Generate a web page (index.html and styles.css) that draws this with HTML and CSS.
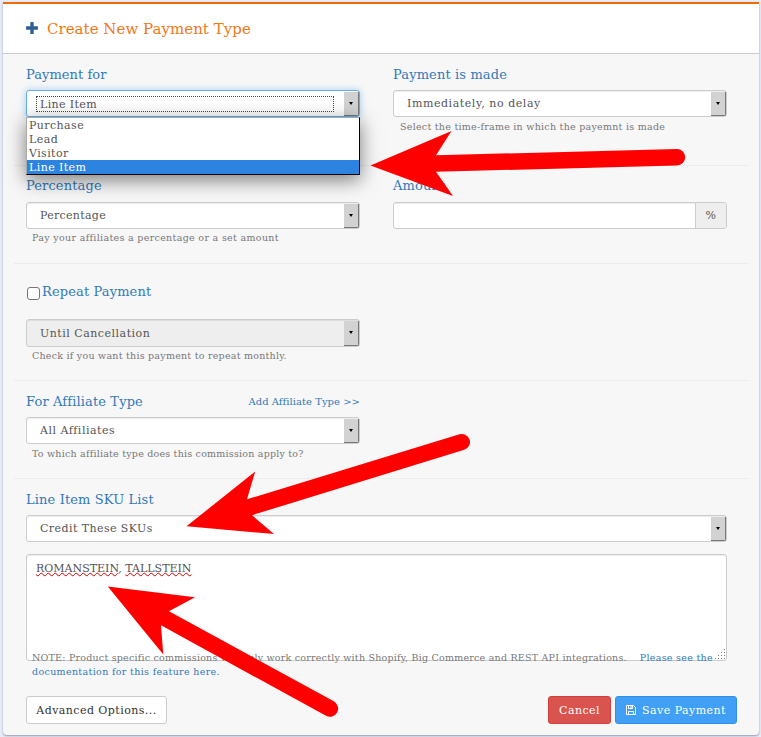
FILE: index.html
```html
<!DOCTYPE html>
<html lang="en">
<head>
<meta charset="utf-8">
<title>Create New Payment Type</title>
<link rel="stylesheet" href="styles.css">
</head>
<body>
<main class="panel">
  <header class="panel-head">
    <svg class="plus" width="12" height="12" viewBox="0 0 12 12"><path d="M4.300.6Q4.300 0 5 0h2q.7 0 .7.6v3.700h3.600q.7 0 .7.7v2q0 .7-.7.7H7.700v3.700q0 .6-.7.6H5q-.7 0-.7-.6V7.700H.7Q0 7.700 0 7V5q0-.7.7-.7h3.600z"/></svg>
    <h1>Create New Payment Type</h1>
  </header>

  <section class="row row-for">
    <div class="field">
      <label class="label l-for">Payment for</label>
      <div class="select focused"><span class="value focus-ring">Line Item</span><i class="drop"></i>
        <ul class="menu">
          <li>Purchase</li><li>Lead</li><li>Visitor</li><li class="active">Line Item</li>
        </ul>
      </div>
    </div>
    <div class="field">
      <label class="label">Payment is made</label>
      <div class="select"><span class="value delay">Immediately, no delay</span><i class="drop"></i></div>
      <p class="help indent">Select the time-frame in which the payemnt is made</p>
    </div>
  </section>

  <section class="row row-amount">
    <div class="field">
      <label class="label">Percentage</label>
      <div class="select"><span class="value v-pct">Percentage</span><i class="drop"></i></div>
      <p class="help h-pct">Pay your affiliates a percentage or a set amount</p>
    </div>
    <div class="field">
      <label class="label">Amount</label>
      <div class="group"><span class="input"></span><span class="addon">%</span></div>
    </div>
  </section>

  <section class="row row-repeat">
    <div class="field">
      <label class="label check"><span class="box"></span><span>Repeat Payment</span></label>
      <div class="select disabled"><span class="value">Until Cancellation</span><i class="drop"></i></div>
      <p class="help h-rep">Check if you want this payment to repeat monthly.</p>
    </div>
  </section>

  <section class="row row-type">
    <div class="field">
      <div class="label split"><span>For Affiliate Type</span><a class="add">Add Affiliate Type &gt;&gt;</a></div>
      <div class="select"><span class="value">All Affiliates</span><i class="drop"></i></div>
      <p class="help">To which affiliate type does this commission apply to?</p>
    </div>
  </section>

  <section class="row row-list">
    <div class="field wide">
      <label class="label">Line Item SKU List</label>
      <div class="select"><span class="value v-sku">Credit These SKUs</span><i class="drop"></i></div>
      <div class="area"><span class="misspelt">ROMANSTEIN</span>, <span class="misspelt">TALLSTEIN</span>
        <svg class="grip" width="11" height="11" viewBox="0 0 11 11"><path d="M9 0h1v1H9zM6 3h1v1H6zM9 3h1v1H9zM3 6h1v1H3zM6 6h1v1H6zM9 6h1v1H9zM0 9h1v1H0zM3 9h1v1H3zM6 9h1v1H6zM9 9h1v1H9z"/></svg>
      </div>
      <p class="help note"><span>NOTE: Product specific commissions will only work correctly with Shopify, Big Commerce and REST API integrations.</span><a class="n2">Please see the</a><br><a class="n3">documentation for this feature here.</a></p>
    </div>
  </section>

  <footer class="actions">
    <button class="btn plain">Advanced Options...</button>
    <button class="btn danger">Cancel</button>
    <button class="btn primary"><svg width="10" height="10" viewBox="0 0 10 10"><path d="M.5.5h7l2 2v7h-9zM2.500.5v3h4v-3M2.500 9.500v-3h5v3"/><path d="M5 1v2"/></svg><span>Save Payment</span></button>
  </footer>
</main>

<svg class="arrows" width="761" height="737" viewBox="0 0 761 737">
  <path d="M370.500 165.500 451.500 131 436 155.300 677 149A8 8 0 0 1 677 165.500L436 171.800 453 196z"/>
  <path d="M186.500 526.300 255.200 471.500 247 499.300 459.500 434.300A8 8 0 0 1 464.300 449.800L252 515.200 274 534z"/>
  <path d="M107.800 586.500 195 597.300 169 611.200 333.800 701.300A8 8 0 0 1 326 715.800L161 625.300 163.300 654.500z"/>
</svg>
</body>
</html>
```
FILE: styles.css
```css
* { box-sizing: border-box; }
body {
  margin: 0;
  height: 737px;
  padding: 2px 2px 0 3px;
  overflow: hidden;
  background: #e9ecf6;
  font-family: "DejaVu Serif", serif;
  font-size: 11px;
  letter-spacing: .3px;
  color: #555;
}
h1, p, ul { margin: 0; padding: 0; }
.panel {
  height: 733px;
  background: #f7f7f7;
  border-top: 2px solid #ee6c00;
  border-radius: 0 0 4px 4px;
  box-shadow: 0 1px 2px rgba(60, 70, 110, .5);
}
.panel-head {
  height: 50px;
  display: flex;
  align-items: center;
  gap: 9px;
  padding-left: 23px;
  background: #fff;
  border-bottom: 1px solid #ccc;
}
.plus { fill: #2d5f93; margin-bottom: 1px; }
h1 { font-size: 15px; font-weight: 400; letter-spacing: .03px; color: #f07818; }

.row {
  display: flex;
  gap: 33px;
  margin: 0 10px 0 11px;
  padding: 0 0 0 12px;
  border-bottom: 1px solid #ececec;
}
.row-for { height: 112px; padding-top: 11px; }
.row-amount { height: 98px; padding-top: 10px; }
.row-amount .label { height: 26px; }
.row-repeat { height: 117px; padding-top: 18px; }
.row-type { height: 98px; padding-top: 11px; }
.row-list { height: 217px; padding-top: 11px; border-bottom: 0; }
.field { width: 334px; }
.field.wide { width: 701px; }
.label {
  display: block;
  height: 25px;
  line-height: 19px;
  font-size: 13px;
  letter-spacing: .13px;
  color: #337ab7;
  white-space: nowrap;
}
.l-for { letter-spacing: .05px; }
.check { display: flex; height: 37px; }
.box {
  width: 13px;
  height: 13px;
  margin: 5px 2px 0 1px;
  border: 1px solid #777;
  border-radius: 3px;
  background: #fff;
}
.split { display: flex; justify-content: space-between; }
.add { font-size: 10px; letter-spacing: .03px; }

.select {
  position: relative;
  display: flex;
  justify-content: space-between;
  height: 27px;
  border: 1px solid #ccc;
  border-radius: 3px;
  background: #fff;
  box-shadow: inset 0 1px 1px rgba(0, 0, 0, .075);
}
.value { padding-left: 13px; line-height: 26px; letter-spacing: .5px; white-space: nowrap; }
.delay { letter-spacing: .56px; }
.v-pct { letter-spacing: .3px; }
.v-sku { letter-spacing: .43px; }
.disabled { height: 28px; background: #eee; }
.disabled .value { line-height: 27px; }
.focused { border-color: #66afe9; box-shadow: 0 0 7px rgba(102, 175, 233, .6); }
.focus-ring {
  width: 298px;
  height: 16px;
  margin: 5px 0 0 9px;
  padding-left: 3px;
  border: 1px dotted #444;
  line-height: 15px;
  letter-spacing: .38px;
}
.drop {
  display: flex;
  align-items: center;
  justify-content: center;
  width: 15px;
  margin: 1px 0 0;
  background: #d2d2d2;
  border-right: 1px solid #777;
  border-bottom: 1px solid #777;
  border-radius: 0 0 2px 0;
}
.drop::before {
  content: "";
  margin-bottom: 1px;
  border: 2.500px solid transparent;
  border-top: 3px solid #000;
  border-bottom: 0;
}
.menu {
  position: absolute;
  z-index: 1;
  left: -1px;
  top: 26px;
  width: 334px;
  height: 58px;
  list-style: none;
  background: #fff;
  border: 1px solid #000;
  border-top-color: #aaa;
  border-left-color: #aaa;
  box-shadow: 0 5px 18px rgba(0, 0, 0, .5);
  letter-spacing: .42px;
}
.menu li { height: 14px; padding-left: 2px; line-height: 15px; }
.menu .active { background: #2d84e0; color: #fff; }

.help { padding: 3px 0 0 6px; font-size: 9.500px; line-height: 14px; letter-spacing: .22px; color: #777; white-space: nowrap; }
.indent { padding-left: 7px; letter-spacing: .26px; }
.h-pct { padding-top: 2px; letter-spacing: .32px; }
.h-rep { padding-top: 2px; letter-spacing: .24px; }
.group { display: flex; height: 27px; border: 1px solid #ccc; border-radius: 3px; overflow: hidden; background: #fff; }
.input { flex: 1; box-shadow: inset 0 1px 1px rgba(0, 0, 0, .075); }
.addon { width: 31px; border-left: 1px solid #ccc; background: #eee; text-align: center; line-height: 25px; }
.area {
  position: relative;
  height: 107px;
  margin-top: 12px;
  padding: 5px 9px;
  border: 1px solid #ccc;
  border-radius: 3px;
  background: #fff;
  box-shadow: inset 0 1px 1px rgba(0, 0, 0, .075);
  line-height: 17px;
  letter-spacing: 0;
}
.misspelt { text-decoration: underline wavy #e00000 1px; text-decoration-skip-ink: none; text-underline-offset: 0; }
.grip { position: absolute; right: 0; bottom: 0; fill: #777; }
.note { position: relative; margin-top: -13px; }
.note a { color: #337ab7; }
.n2 { margin-left: 13px; letter-spacing: .3px; }
.n3 { letter-spacing: .34px; }

.actions { display: flex; height: 28px; margin: 0 22px 0 23px; }
.btn {
  display: flex;
  align-items: center;
  justify-content: center;
  height: 28px;
  padding: 0;
  border: 1px solid #ccc;
  border-radius: 3px;
  font: 11px "DejaVu Serif", serif;
  letter-spacing: .45px;
  white-space: nowrap;
}
.plain { width: 141px; margin-right: auto; background: #fff; color: #333; }
.danger { width: 63px; margin-right: 4px; background: #d9534f; border-color: #d43f3a; color: #fff; }
.primary { width: 122px; gap: 6px; background: #419ff5; border-color: #3090e8; color: #fff; }
.primary svg { fill: none; stroke: #fff; }
.arrows { position: absolute; z-index: 5; left: 0; top: 0; fill: #f00; }
```
